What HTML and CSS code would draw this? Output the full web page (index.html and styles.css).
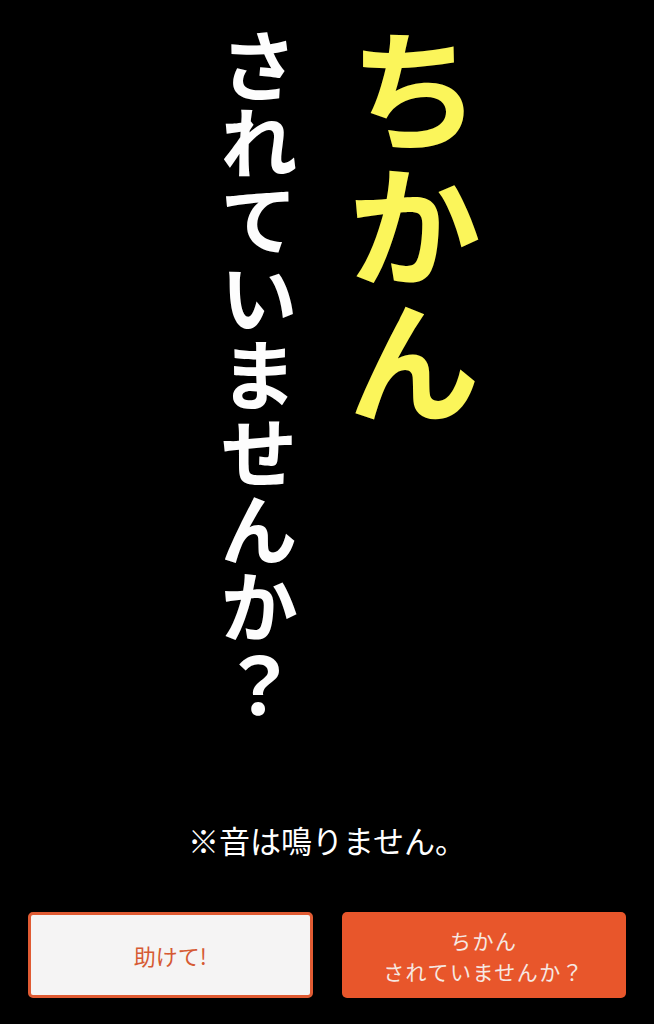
FILE: index.html
```html
<!DOCTYPE html>
<html lang="ja">
<head>
<meta charset="utf-8">
<link rel="stylesheet" href="styles.css">
</head>
<body>
<div class="page">
  <div class="headline">
    <div class="col sub">されていませんか？</div>
    <div class="col main">ちかん</div>
  </div>
  <p class="notice">※音は鳴りません。</p>
  <div class="buttons">
    <button class="btn btn-light">助けて!</button>
    <button class="btn btn-dark"><span class="line">ちかん</span><span class="line">されていませんか？</span></button>
  </div>
</div>
</body>
</html>
```
FILE: styles.css
```css
html, body {
  margin: 0;
  padding: 0;
  background: #000;
}
.page {
  width: 654px;
  height: 1024px;
  display: flex;
  flex-direction: column;
  font-family: "Noto Sans CJK JP", "Noto Sans", sans-serif;
  color: #fff;
}
.headline {
  display: flex;
  flex-direction: row;
  align-items: flex-start;
  padding-left: 220px;
  gap: 49px;
  height: 790px;
}
.col {
  writing-mode: vertical-rl;
  line-height: 1;
  font-weight: 700;
}
.sub {
  font-size: 78px;
  color: #fdfdfd;
  margin-top: 27px;
  letter-spacing: -0.6px;
}
.main {
  font-size: 134px;
  color: #fbf55a;
  margin-top: 24px;
  letter-spacing: 2px;
}
.notice {
  margin: 30px 0 0 0;
  text-align: center;
  font-size: 31px;
  line-height: 40px;
  padding-left: 0;
}
.buttons {
  display: flex;
  gap: 29px;
  padding: 0 28px;
  margin-top: 52px;
}
.btn {
  width: 285px;
  height: 86px;
  border-radius: 5px;
  font-family: "Noto Sans CJK JP", "Noto Sans", sans-serif;
  font-size: 22px;
  line-height: 27px;
  padding: 0;
  box-sizing: border-box;
}
.btn-light {
  background: #f5f4f4;
  border: 3px solid #e05b33;
  color: #d65a33;
}
.btn-dark {
  background: #e8562b;
  border: none;
  color: #f6e8e2;
  font-size: 21px;
  letter-spacing: 1.5px;
  display: flex;
  flex-direction: column;
  align-items: center;
  justify-content: center;
  gap: 5px;
}
.line {
  display: block;
  line-height: 26px;
}
```
